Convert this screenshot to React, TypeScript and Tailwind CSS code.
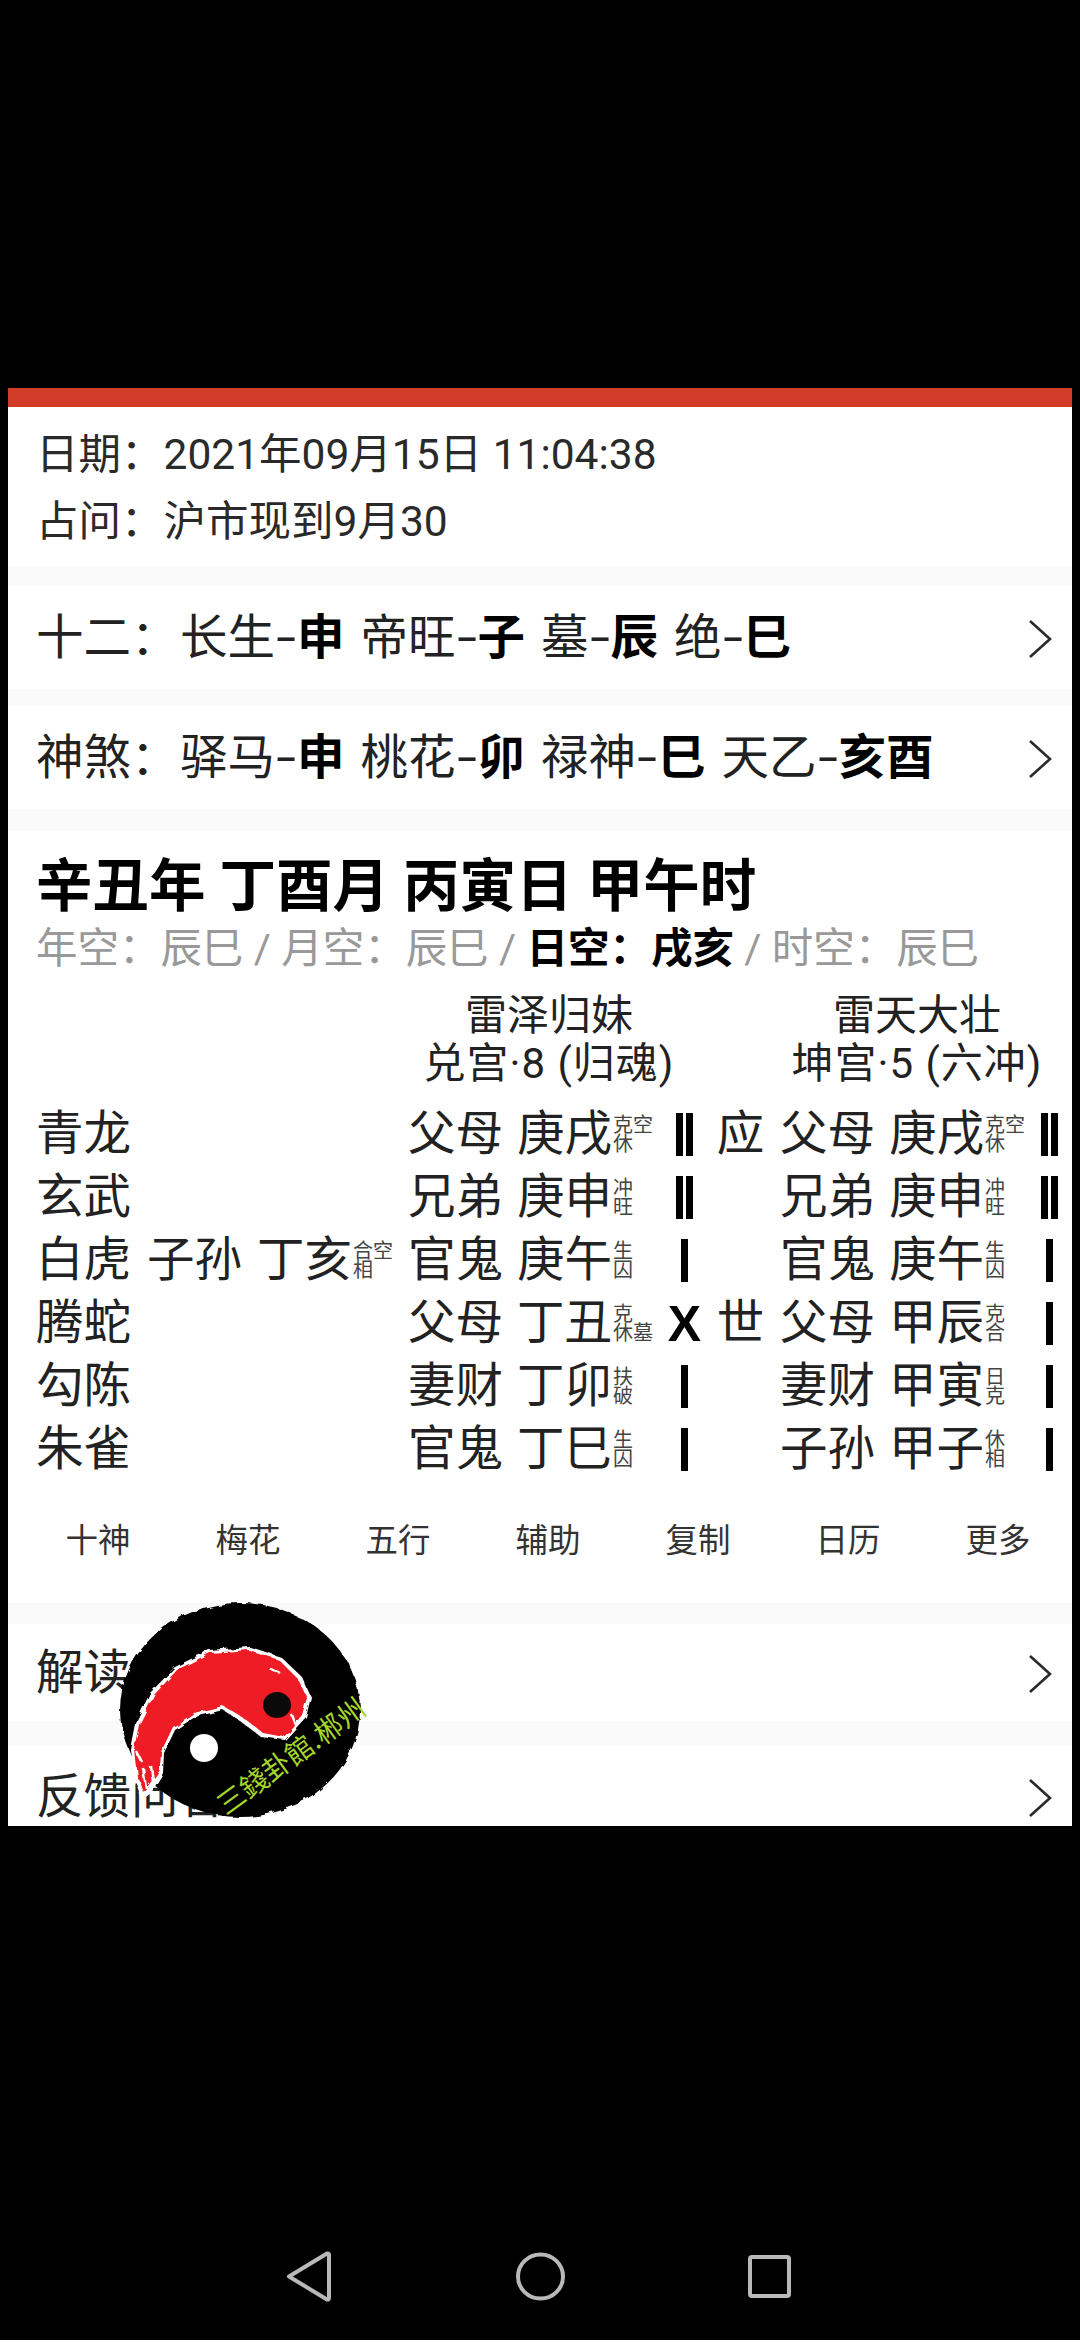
const font = { fontFamily: '"Roboto", "Noto Sans CJK SC", sans-serif' };

type Line = { name: string; branch: string; sub: [string, string]; mark: 'yin' | 'yang' | 'x' };

const rows: { god: string; hidden?: { name: string; branch: string; sub: [string, string] }; left: Line; tag?: string; right: Line }[] = [
  {
    god: '青龙',
    left: { name: '父母', branch: '庚戌', sub: ['克空', '休'], mark: 'yin' },
    tag: '应',
    right: { name: '父母', branch: '庚戌', sub: ['克空', '休'], mark: 'yin' },
  },
  {
    god: '玄武',
    left: { name: '兄弟', branch: '庚申', sub: ['冲', '旺'], mark: 'yin' },
    right: { name: '兄弟', branch: '庚申', sub: ['冲', '旺'], mark: 'yin' },
  },
  {
    god: '白虎',
    hidden: { name: '子孙', branch: '丁亥', sub: ['合空', '相'] },
    left: { name: '官鬼', branch: '庚午', sub: ['生', '囚'], mark: 'yang' },
    right: { name: '官鬼', branch: '庚午', sub: ['生', '囚'], mark: 'yang' },
  },
  {
    god: '腾蛇',
    left: { name: '父母', branch: '丁丑', sub: ['克', '休墓'], mark: 'x' },
    tag: '世',
    right: { name: '父母', branch: '甲辰', sub: ['克', '合'], mark: 'yang' },
  },
  {
    god: '勾陈',
    left: { name: '妻财', branch: '丁卯', sub: ['扶', '破'], mark: 'yang' },
    right: { name: '妻财', branch: '甲寅', sub: ['日', '克'], mark: 'yang' },
  },
  {
    god: '朱雀',
    left: { name: '官鬼', branch: '丁巳', sub: ['生', '囚'], mark: 'yang' },
    right: { name: '子孙', branch: '甲子', sub: ['休', '相'], mark: 'yang' },
  },
];

const tabs = ['十神', '梅花', '五行', '辅助', '复制', '日历', '更多'];

function Band({ h }: { h: string }) {
  return <div className={`${h} bg-[#fafafa]`} />;
}

function Chevron() {
  return (
    <svg width="24" height="38" viewBox="0 0 24 38" fill="none" className="shrink-0">
      <path d="M2 1 L22 19 L2 37" stroke="#2a2a2a" strokeWidth="2.6" />
    </svg>
  );
}

function Pair({ a, b }: { a: string; b: string }) {
  return (
    <span className="flex items-center">
      <span>{a}</span>
      <span className="w-[22px] text-center scale-x-150">-</span>
      <span className="font-bold text-black">{b}</span>
    </span>
  );
}

function ListRow({ label, pairs, h }: { label: string; pairs: [string, string][]; h: string }) {
  return (
    <div className={`${h} flex items-center pl-[28px] pr-[20px] pt-[3px] text-[47.5px] text-[#222]`}>
      <span className="w-[144px]">{label}</span>
      <div className="flex-1 flex gap-[16px]">
        {pairs.map(([a, b], i) => (
          <Pair key={i} a={a} b={b} />
        ))}
      </div>
      <Chevron />
    </div>
  );
}

function Sub({ sub, w }: { sub: [string, string]; w: string }) {
  return (
    <div className={`${w} shrink-0 text-[20px] leading-[19px] text-[#444] pl-[1px] whitespace-nowrap`}>
      <div>{sub[0]}</div>
      <div>{sub[1]}</div>
    </div>
  );
}

function Mark({ kind }: { kind: Line['mark'] }) {
  return (
    <div className="w-[33px] shrink-0 flex justify-center items-center gap-[3px]">
      {kind === 'x' && (
        <span className="font-bold text-[50px] leading-none text-black" style={{ fontFamily: '"Liberation Sans", sans-serif' }}>
          X
        </span>
      )}
      {kind === 'yang' && <div className="w-[7px] h-[43px] bg-black" />}
      {kind === 'yin' && (
        <>
          <div className="w-[7px] h-[43px] bg-black" />
          <div className="w-[7px] h-[43px] bg-black" />
        </>
      )}
    </div>
  );
}

function Logo() {
  return (
    <svg width="242" height="216" viewBox="0 0 242 216" className="absolute left-[111px] top-[1214px] overflow-visible">
      <defs>
        <filter id="brush" x="-5%" y="-5%" width="110%" height="110%">
          <feTurbulence type="fractalNoise" baseFrequency="0.09" numOctaves="2" seed="4" />
          <feDisplacementMap in="SourceGraphic" scale="6" />
        </filter>
      </defs>
      <g filter="url(#brush)">
        <ellipse cx="121" cy="108" rx="120" ry="107" fill="#050505" />
        <path
          d="M16 178 L12 148 L18 118 L31 91 L56 65 L90 48 L131 45 L162 55 L183 75 L192 95 L187 115 L166 138 L142 135 L124 121 L104 108 L76 115 L56 128 L45 151 L44 171 L32 191 L23 198 Z"
          fill="#ffffff"
        />
        <path
          d="M19 176 L16 148 L22 119 L35 93 L58 68 L91 51 L130 48 L160 58 L179 77 L188 96 L183 113 L165 135 L144 131 L126 117 L104 104 L75 111 L54 125 L42 150 L41 168 L32 180 L24 190 Z"
          fill="#ef1f26"
        />
        <path d="M24 166 L27 186 M32 164 L34 180 M18 150 L23 160 M150 66 L162 72 M172 112 L176 122" stroke="#ffffff" strokeWidth="2.5" />
      </g>
      <ellipse cx="158" cy="103" rx="14" ry="13" fill="#0a0a0a" />
      <ellipse cx="85" cy="146" rx="14" ry="14" fill="#ffffff" />
      <text
        x="107"
        y="214"
        transform="rotate(-36 107 214)"
        fontSize="28"
        fill="#a6d62a"
        style={{ fontFamily: '"Noto Sans CJK TC", sans-serif' }}
      >
        三錢卦館.郴州
      </text>
    </svg>
  );
}

export default function App() {
  return (
    <div className="w-[1080px] h-[2340px] bg-black overflow-hidden" style={font}>
      <div className="pt-[388px] px-[8px]">
        <div className="relative h-[1438px] bg-white overflow-hidden text-[#222]">
          <div className="h-[19px] bg-[#d13c28]" />

          {/* 日期 */}
          <div className="pt-[14px] pb-[11px] pl-[28px] text-[42.5px] leading-[67px] text-[#2a2a2a]">
            <div>日期：2021年09月15日 11:04:38</div>
            <div>占问：沪市现到9月30</div>
          </div>

          <Band h="h-[20px]" />
          <ListRow
            label="十二："
            h="h-[103px]"
            pairs={[
              ['长生', '申'],
              ['帝旺', '子'],
              ['墓', '辰'],
              ['绝', '巳'],
            ]}
          />
          <Band h="h-[17px]" />
          <ListRow
            label="神煞："
            h="h-[103px]"
            pairs={[
              ['驿马', '申'],
              ['桃花', '卯'],
              ['禄神', '巳'],
              ['天乙', '亥酉'],
            ]}
          />
          <Band h="h-[22px]" />

          {/* 四柱 */}
          <div className="pt-[24px] pl-[28px] text-[56.5px] leading-[64px] font-bold text-black whitespace-pre">辛丑年 丁酉月 丙寅日 甲午时</div>
          <div className="pl-[28px] text-[41.5px] leading-[59px] text-[#999] whitespace-pre">
            年空：辰巳 / 月空：辰巳 / <span className="font-bold text-black">日空：戌亥</span> / 时空：辰巳
          </div>

          {/* 卦名 */}
          <div className="mt-[14px] ml-[401px] flex text-[42px] leading-[48px] text-center text-[#222]">
            <div className="w-[280px]">
              <div>雷泽归妹</div>
              <div className="tracking-[1px]">兑宫·8 (归魂)</div>
            </div>
            <div className="ml-[88px] w-[280px]">
              <div>雷天大壮</div>
              <div className="tracking-[1px]">坤宫·5 (六冲)</div>
            </div>
          </div>

          {/* 六爻 */}
          <div className="mt-[15px] pl-[28px]">
            {rows.map((r) => (
              <div key={r.god} className="h-[63px] flex items-center text-[47.5px] text-[#222] whitespace-nowrap">
                <div className="w-[111px] shrink-0">{r.god}</div>
                <div className="w-[261px] shrink-0 flex items-center">
                  {r.hidden && (
                    <>
                      <div className="w-[110px]">{r.hidden.name}</div>
                      <div className="w-[95px]">{r.hidden.branch}</div>
                      <Sub sub={r.hidden.sub} w="w-[56px]" />
                    </>
                  )}
                </div>
                <div className="w-[109px] shrink-0">{r.left.name}</div>
                <div className="w-[95px] shrink-0">{r.left.branch}</div>
                <Sub sub={r.left.sub} w="w-[56px]" />
                <Mark kind={r.left.mark} />
                <div className="w-[79px] shrink-0 text-center">{r.tag}</div>
                <div className="w-[109px] shrink-0">{r.right.name}</div>
                <div className="w-[95px] shrink-0">{r.right.branch}</div>
                <Sub sub={r.right.sub} w="w-[49px]" />
                <Mark kind={r.right.mark} />
              </div>
            ))}
          </div>

          {/* 工具栏 */}
          <div className="mt-[30px] h-[60px] pl-[15px] grid grid-cols-[repeat(7,150px)] items-center text-center text-[32.5px] text-[#333]">
            {tabs.map((t) => (
              <div key={t}>{t}</div>
            ))}
          </div>

          <Band h="mt-[32px] h-[21px]" />
          <div className="h-[97px] flex items-center justify-between pl-[28px] pr-[20px] pt-[3px] text-[47.5px]">
            <span>解读</span>
            <Chevron />
          </div>
          <Band h="h-[25px]" />
          <div className="h-[103px] flex items-center justify-between pl-[28px] pr-[20px] text-[47.5px]">
            <span>反馈问答</span>
            <Chevron />
          </div>

          <Logo />
        </div>
      </div>

      {/* 导航栏 */}
      <div className="pt-[425px] pl-[286px] flex items-center">
        <svg width="46" height="51" viewBox="0 0 46 51" fill="none">
          <path d="M3 25.5 L41 2.5 Q43 2 43 4 L43 47 Q43 49 41 48.5 Z" stroke="#b9b9b9" strokeWidth="4" strokeLinejoin="round" />
        </svg>
        <svg width="53" height="51" viewBox="0 0 53 51" fill="none" className="ml-[182px]">
          <ellipse cx="26.5" cy="25.5" rx="22.5" ry="22" stroke="#b9b9b9" strokeWidth="4" />
        </svg>
        <svg width="47" height="47" viewBox="0 0 47 47" fill="none" className="ml-[179px]">
          <rect x="4" y="4" width="39" height="39" rx="2" stroke="#b9b9b9" strokeWidth="4" />
        </svg>
      </div>
    </div>
  );
}
